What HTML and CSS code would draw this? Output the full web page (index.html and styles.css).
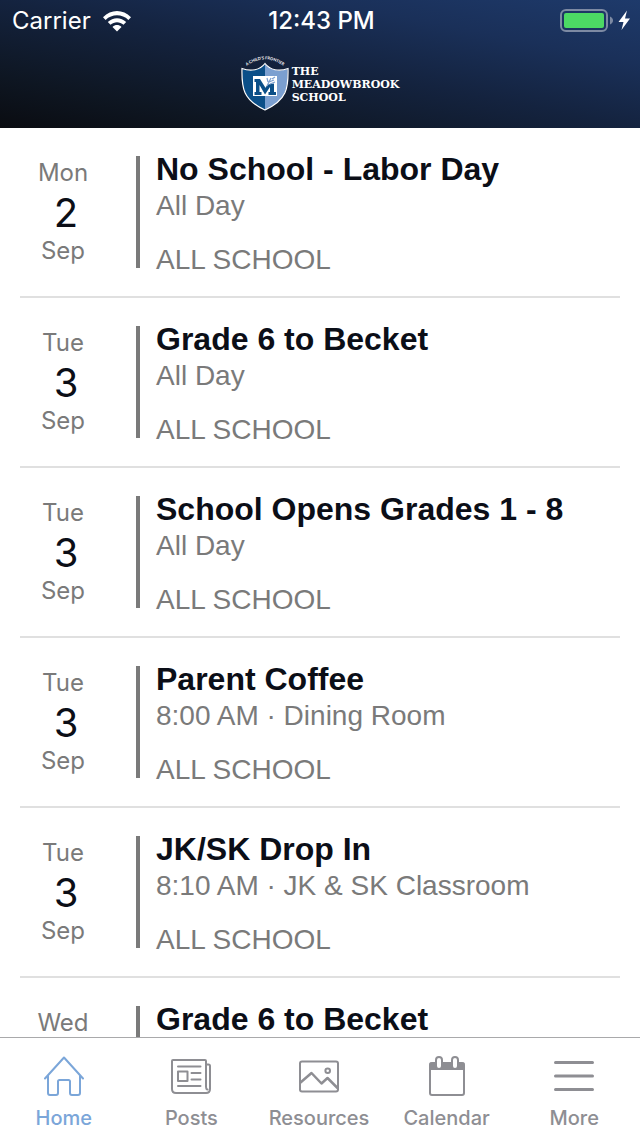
FILE: index.html
```html
<!DOCTYPE html>
<html lang="en">
<head>
<meta charset="utf-8">
<meta name="viewport" content="width=device-width, initial-scale=1">
<title>The Meadowbrook School</title>
<link rel="stylesheet" href="styles.css">
</head>
<body>
<header class="header">
  <div class="status">
    <div class="status-left">
      <span>Carrier</span>
      <svg width="28" height="21" viewBox="0 0 28 21" fill="#fff" aria-label="Wi-Fi">
        <path d="M0 6.200C8-2 20-2 28 6.200L25.400 9C19 2.800 9 2.800 2.600 9Z"/>
        <path d="M4.800 11.100C10 6 18 6 23.200 11.100L20.500 13.800C16.800 10.300 11.200 10.300 7.500 13.800Z"/>
        <path d="M9.500 15.900C12.200 13.500 15.800 13.500 18.500 15.900L14 20.400Z"/>
      </svg>
    </div>
    <time class="status-time">12:43 PM</time>
    <div class="status-right">
      <svg width="71" height="24" viewBox="0 0 71 24" aria-label="Battery charging">
        <rect x="1" y="1" width="46" height="21" rx="5" fill="none" stroke="#7d8aa3" stroke-width="2"/>
        <rect x="4" y="4" width="40" height="15" rx="2" fill="#4cd964"/>
        <path d="M50 7.500C54 9 54 14 50 15.500Z" fill="#7d8aa3"/>
        <path d="M67 1.500L58.500 13H63.500L61.500 21L70 9.500H65Z" fill="#fff"/>
      </svg>
    </div>
  </div>
  <div class="brand">
    <svg class="shield" width="48" height="54" viewBox="0 0 48 54" aria-hidden="true">
      <path id="motto" d="M3 11Q24-6.500 45 11" fill="none"/>
      <text class="motto"><textPath href="#motto" startOffset="50%" text-anchor="middle">A CHILD'S FRONTIER</textPath></text>
      <path d="M24 7C19 13 10 15 1.500 12C1 30 2 43 24 53Z" fill="#0b4f88"/>
      <path d="M24 7C29 13 38 15 46.500 12C47 30 46 43 24 53Z" fill="#7b9fd0"/>
      <path d="M24 6.500C19 13 10 15 1 11.500C.5 31 2 43 24 53C46 43 47.500 31 47 11.500C38 15 29 13 24 6.500Z" fill="none" stroke="#fff" stroke-width="1.200"/>
      <path d="M12 19H36V39H12Z" fill="#fff"/>
      <path d="M13.500 22H19L24 30V37.500L18.500 28V35H20.500V38H13.500V35H15V25H13.500Z" fill="#0b4f88"/>
      <path d="M24 37.500V31L27 27.500L33 26.500V35H35V38H27.500V35H29V30Z" fill="#0b4f88"/>
      <path d="M26 29L30 21M27 25L26 21M28 25L33 23M29 27L34 25M31 22L34 20" stroke="#7b9fd0" stroke-width="1.200" fill="none"/>
    </svg>
    <h1 class="brand-name">THE<br>MEADOWBROOK<br>SCHOOL</h1>
  </div>
</header>

<main class="events">
  <article class="event">
    <div class="date"><span class="weekday">Mon</span><span class="day">2</span><span class="month">Sep</span></div>
    <div class="rule"></div>
    <div class="details"><h2 class="title">No School - Labor Day</h2><p class="info">All Day</p><p class="group">ALL SCHOOL</p></div>
  </article>
  <article class="event">
    <div class="date"><span class="weekday">Tue</span><span class="day">3</span><span class="month">Sep</span></div>
    <div class="rule"></div>
    <div class="details"><h2 class="title">Grade 6 to Becket</h2><p class="info">All Day</p><p class="group">ALL SCHOOL</p></div>
  </article>
  <article class="event">
    <div class="date"><span class="weekday">Tue</span><span class="day">3</span><span class="month">Sep</span></div>
    <div class="rule"></div>
    <div class="details"><h2 class="title">School Opens Grades 1 - 8</h2><p class="info">All Day</p><p class="group">ALL SCHOOL</p></div>
  </article>
  <article class="event">
    <div class="date"><span class="weekday">Tue</span><span class="day">3</span><span class="month">Sep</span></div>
    <div class="rule"></div>
    <div class="details"><h2 class="title">Parent Coffee</h2><p class="info">8:00 AM · Dining Room</p><p class="group">ALL SCHOOL</p></div>
  </article>
  <article class="event">
    <div class="date"><span class="weekday">Tue</span><span class="day">3</span><span class="month">Sep</span></div>
    <div class="rule"></div>
    <div class="details"><h2 class="title">JK/SK Drop In</h2><p class="info">8:10 AM · JK &amp; SK Classroom</p><p class="group">ALL SCHOOL</p></div>
  </article>
  <article class="event">
    <div class="date"><span class="weekday">Wed</span></div>
    <div class="rule"></div>
    <div class="details"><h2 class="title">Grade 6 to Becket</h2></div>
  </article>
</main>

<nav class="tabs">
  <a class="tab tab-active" href="#home">
    <svg class="icon" viewBox="0 0 40 40"><path d="M1 22.500L20 1.500L39 22.500M4 20V37Q4 39 6 39H12Q14 39 14 37V25.500Q14 24 15.500 24H24.500Q26 24 26 25.500V37Q26 39 28 39H34Q36 39 36 37V20"/></svg>
    <span>Home</span>
  </a>
  <a class="tab" href="#posts">
    <svg class="icon" viewBox="0 0 40 40"><path d="M35 31V5Q35 4 34 4H2Q1 4 1 5V33Q1 37 5 37H35Q39 37 39 33V10Q39 8.500 37.500 8.500H35M35 30Q35 33.500 36.500 33.500M7 10.500H29.500M20.500 17H29.500M20.500 23.500H29.500M7 30H29.500M7 15.500H16.500V25H7Z"/></svg>
    <span>Posts</span>
  </a>
  <a class="tab" href="#resources">
    <svg class="icon" viewBox="0 0 40 40"><rect x="1" y="5.500" width="38" height="30" rx="2"/><circle cx="28.700" cy="14.700" r="2.300"/><path d="M1.500 26.500L12.500 17L22.500 27.500L28.500 22L38.500 32" stroke-width="2.500"/></svg>
    <span>Resources</span>
  </a>
  <a class="tab" href="#calendar">
    <svg class="icon" viewBox="0 0 40 40"><path d="M3.500 7.500H36.500V13H3.500Z" fill="currentColor"/><rect x="3" y="7" width="34" height="32" rx="2"/><rect x="9" y="1" width="6" height="12" rx="3" fill="#fff"/><rect x="25" y="1" width="6" height="12" rx="3" fill="#fff"/></svg>
    <span>Calendar</span>
  </a>
  <a class="tab" href="#more">
    <svg class="icon" viewBox="0 0 40 40"><path d="M1.500 6.500H38.500M1.500 20H38.500M1.500 33.500H38.500" stroke-width="3"/></svg>
    <span>More</span>
  </a>
</nav>
</body>
</html>
```
FILE: styles.css
```css
* {
  box-sizing: border-box;
}

body {
  margin: 0;
  height: 100vh;
  display: flex;
  flex-direction: column;
  overflow: hidden;
  background: #fff;
  font-family: "Liberation Sans", Arial, sans-serif;
  color: #0b0e17;
}

h1, h2, p {
  margin: 0;
}

.header {
  flex: none;
  height: 128px;
  background: linear-gradient(to top right, #0a0c11 0%, #0e1622 20%, #14233f 50%, #1a3059 75%, #1e3a6b 100%);
  color: #fff;
}

.status {
  display: grid;
  grid-template-columns: 1fr auto 1fr;
  align-items: center;
  height: 42px;
  padding: 0 9px 0 12px;
  font: 24px/42px Inter, sans-serif;
}

.status-left,
.status-right {
  display: flex;
  align-items: center;
  gap: 12px;
}

.status-right {
  justify-content: flex-end;
}

.status-time {
  font-weight: 500;
}

.brand {
  display: flex;
  justify-content: center;
  align-items: center;
  gap: 3px;
  margin-top: 15px;
}

.shield {
  overflow: visible;
}

.motto {
  font: bold 4px Lato, sans-serif;
  fill: #fff;
}

.brand-name {
  font: bold 11px/13px "DejaVu Serif", serif;
}

.events {
  flex: 1;
  min-height: 0;
  overflow: hidden;
  padding: 0 20px;
}

.event {
  display: grid;
  grid-template-columns: 86px 4px 1fr;
  column-gap: 30px;
  min-height: 170px;
  padding: 23px 0 18px;
  border-bottom: 2px solid #e0e0e0;
}

.date {
  display: flex;
  flex-direction: column;
  align-items: center;
  padding-top: 8px;
  font-family: Inter, sans-serif;
  font-size: 24px;
  color: #7a7a7a;
}

.weekday {
  line-height: 28px;
}

.day {
  padding-left: 6px;
  font-size: 40px;
  line-height: 52px;
  color: #0b0e17;
}

.month {
  line-height: 24px;
}

.rule {
  margin: 5px 0 10px;
  background: #7a7a7a;
}

.details {
  margin-left: -14px;
}

.title {
  margin-bottom: 1px;
  font-size: 32px;
  line-height: 36px;
}

.info,
.group {
  font-size: 28px;
  line-height: 36px;
  color: #7a7a7a;
}

.group {
  margin-top: 18px;
}

.tabs {
  flex: none;
  display: grid;
  grid-template-columns: repeat(5, 1fr);
  height: 99px;
  padding-right: 2px;
  border-top: 1px solid #a9a9ab;
  background: #fff;
}

.tab {
  display: flex;
  flex-direction: column;
  align-items: center;
  gap: 10px;
  padding-top: 18px;
  color: #8e8e93;
  text-decoration: none;
  font: 500 20px/24px Inter, sans-serif;
}

.tab-active {
  color: #7ba6d9;
}

.icon {
  width: 40px;
  height: 40px;
  fill: none;
  stroke: currentColor;
  stroke-width: 2;
  stroke-linecap: round;
  stroke-linejoin: round;
}
```
